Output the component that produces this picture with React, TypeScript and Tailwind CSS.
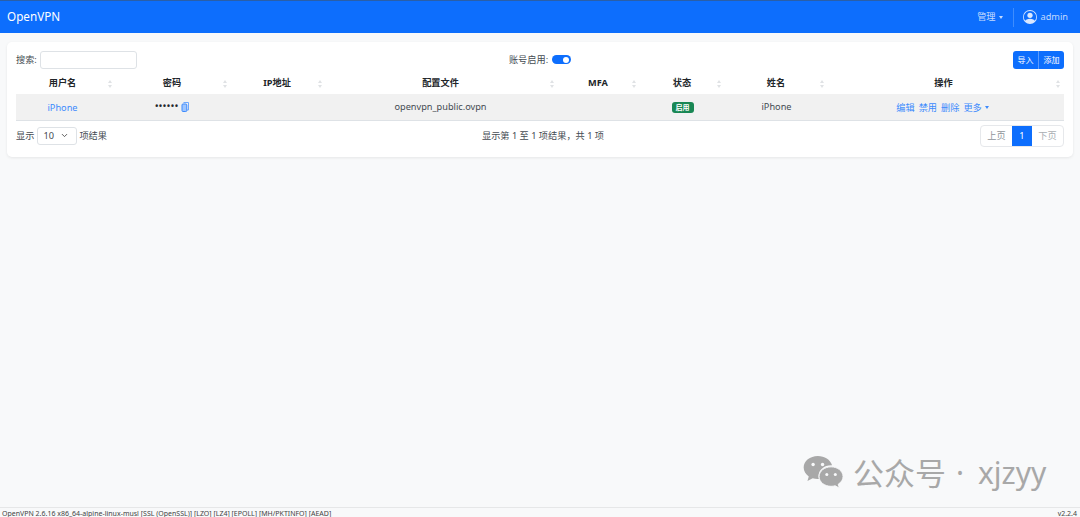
import { ChevronDown } from 'lucide-react';

const font = 'font-["Noto_Sans","Noto_Sans_CJK_SC",sans-serif]';

const columns = [
  { label: '用户名', width: 'w-[100px] pr-[7px]' },
  { label: '密码', width: 'w-[115px] pr-[3px]' },
  { label: 'IP地址', width: 'w-[95px] pr-[3px]' },
  { label: '配置文件', width: 'w-[232px] pr-[3px]' },
  { label: 'MFA', width: 'w-[82px] pr-[2px]' },
  { label: '状态', width: 'w-[85px] pr-[1px]' },
  { label: '姓名', width: 'w-[103px] pr-[1px]' },
  { label: '操作', width: 'w-[236px] pr-[5px]' },
];

function SortIcon() {
  return (
    <svg className="absolute right-[4px] top-[8px]" width="4" height="8" viewBox="0 0 4 8" fill="#e0e2e5">
      <path d="M2 0 4 3H0Z" />
      <path d="M2 8 0 5h4Z" />
    </svg>
  );
}

function WeChatMark() {
  return (
    <svg width="41" height="34" viewBox="0 0 42 36" fill="#a8a8a8">
      <path d="M15 0C6.700 0 0 5.400 0 12.200c0 3.800 2.100 7.100 5.400 9.400L4 26.500l5.600-2.900c1.600.5 3.300.8 5.100.8.5 0 1-.1 1.500-.1-.3-1-.5-2-.5-3.100 0-6.400 6-11.500 13.400-11.500h1C28.200 3.900 22.200 0 15 0Z" />
      <path d="M29 11.500c-7 0-12.700 4.600-12.700 10.300S22 32.100 29 32.100c1.500 0 3-.2 4.300-.6l4.500 2.500-1.200-4.100c3.200-2 5.100-4.900 5.100-8.100 0-5.700-5.700-10.300-12.700-10.300Z" stroke="#f8f9fa" strokeWidth="1" />
      <circle cx="10" cy="9" r="1.800" fill="#f8f9fa" />
      <circle cx="20" cy="9" r="1.800" fill="#f8f9fa" />
      <circle cx="24.500" cy="19.500" r="1.600" fill="#f8f9fa" />
      <circle cx="33.500" cy="19.500" r="1.600" fill="#f8f9fa" />
    </svg>
  );
}

export default function App() {
  return (
    <div className={`${font} relative flex h-[517px] w-[1080px] flex-col overflow-hidden bg-[#f8f9fa] text-[9.200px] text-[#444b52]`}>
      {/* Navbar */}
      <nav className="flex h-[33px] shrink-0 items-center justify-between border-t border-[#2a5fa8] bg-[#0d6efd] pl-[7px] pr-[12px]">
        <span className="text-[11.700px] text-white">OpenVPN</span>
        <div className="flex items-center text-[#c3dafe]">
          <span>管理</span>
          <span className="ml-[3px] h-0 w-0 border-x-[2.500px] border-t-[3px] border-x-transparent border-t-[#c3dafe]" />
          <div className="ml-[10px] mr-[9px] h-[19px] w-px bg-[#3f8dfd]" />
          <svg width="14" height="14" viewBox="0 0 16 16" fill="#dbe8ff">
            <path d="M11 6a3 3 0 1 1-6 0 3 3 0 0 1 6 0z" />
            <path fillRule="evenodd" d="M0 8a8 8 0 1 1 16 0A8 8 0 0 1 0 8zm8-7a7 7 0 0 0-5.468 11.370C3.242 11.226 4.805 10 8 10s4.757 1.225 5.468 2.370A7 7 0 0 0 8 1z" />
          </svg>
          <span className="ml-[4px]">admin</span>
        </div>
      </nav>

      {/* Main */}
      <main className="flex-1 px-[7px] pt-[9px]">
        <div className="rounded-[5px] bg-white px-[9px] pb-[10px] pt-[9px] shadow-[0_1px_3px_rgba(0,0,0,0.08)]">
          <div className="grid h-[18px] grid-cols-[1fr_auto_1fr] items-center">
            <div className="flex items-center">
              <span>搜索:</span>
              <input className="ml-[3px] h-[18px] w-[97px] rounded-[3px] border border-[#dee2e6] bg-white" />
            </div>
            <div className="flex items-center">
              <span>账号启用:</span>
              <span className="ml-[4px] flex h-[9px] w-[19px] items-center justify-end rounded-full bg-[#0d6efd] pr-[2px]">
                <span className="h-[6px] w-[6px] rounded-full bg-white" />
              </span>
            </div>
            <div className="flex justify-end">
              <div className="flex h-[18px] overflow-hidden rounded-[3px] bg-[#0d6efd] text-[8px] text-white">
                <span className="flex w-[25px] items-center justify-center">导入</span>
                <span className="flex w-[26px] items-center justify-center border-l border-[#5b9bfd]">添加</span>
              </div>
            </div>
          </div>

          <table className="mt-[3px] w-[1048px] table-fixed border-collapse">
            <thead>
              <tr className="h-[22px]">
                {columns.map((c) => (
                  <th key={c.label} className={`${c.width} relative text-center align-middle text-[9.200px] font-bold text-[#212529]`}>
                    {c.label}
                    <SortIcon />
                  </th>
                ))}
              </tr>
            </thead>
            <tbody>
              <tr className="h-[26px] border-b border-[#dee2e6] bg-[#f1f1f1] text-center">
                <td className="pr-[7px] pt-[2px] text-[#3d8bfd]">iPhone</td>
                <td className="pr-[3px] pt-[1px]">
                  <span className="inline-flex items-center text-[#212529]">
                    <span className="text-[10.500px] leading-none">••••••</span>
                    <svg className="ml-[3px]" width="8" height="10" viewBox="0 0 8 10" fill="none">
                      <path d="M2.500.5h5v7.500h-2" stroke="#6ea8fe" strokeWidth="1" />
                      <rect x="1" y="2" width="4.800" height="7.500" rx="1" fill="#9ec5fe" stroke="#3d8bfd" strokeWidth="1" />
                    </svg>
                  </span>
                </td>
                <td />
                <td className="pr-[3px]">openvpn_public.ovpn</td>
                <td />
                <td>
                  <span className="inline-block h-[11px] w-[22px] rounded-[3px] bg-[#198754] text-[7px] font-bold leading-[11px] text-white">启用</span>
                </td>
                <td>iPhone</td>
                <td className="pr-[7px] pt-[2px] text-[#3d8bfd]">
                  <span className="inline-flex items-center gap-[4px]">
                    <span>编辑</span>
                    <span>禁用</span>
                    <span>删除</span>
                    <span className="flex items-center">
                      更多
                      <span className="ml-[3px] h-0 w-0 border-x-[2.500px] border-t-[3px] border-x-transparent border-t-[#3d8bfd]" />
                    </span>
                  </span>
                </td>
              </tr>
            </tbody>
          </table>

          <div className="mt-[4px] grid h-[22px] grid-cols-[1fr_auto_1fr] items-center">
            <div className="flex items-center">
              <span>显示</span>
              <div className="ml-[3px] mr-[2px] flex h-[18px] w-[40px] items-center justify-between rounded-[3px] border border-[#dee2e6] pl-[5px] pr-[7px]">
                <span>10</span>
                <ChevronDown size={9} strokeWidth={2.500} className="text-[#555]" />
              </div>
              <span>项结果</span>
            </div>
            <div className="whitespace-pre pl-[6px]">显示第 1 至 1 项结果，共 1 项</div>
            <div className="flex justify-end">
              <div className="flex h-[22px] overflow-hidden rounded-[4px] border border-[#e6e8eb] text-[#8f959b]">
                <span className="flex w-[31px] items-center justify-center">上页</span>
                <span className="flex w-[20px] items-center justify-center bg-[#0d6efd] text-white">1</span>
                <span className="flex w-[31px] items-center justify-center text-[#a9aeb3]">下页</span>
              </div>
            </div>
          </div>
        </div>
      </main>

      {/* Watermark sits over the page background */}
      <div className="absolute left-[803px] top-[456px] flex items-start text-[30px] leading-[34px] text-[#a8a8a8]">
        <WeChatMark />
        <span className="ml-[9px] whitespace-nowrap text-[31px]">公众号</span>
        <span className="ml-[10px] w-[21px]">·</span>
        <span className="ml-[1px]">xjzyy</span>
      </div>

      {/* Footer */}
      <footer className="flex h-[10px] shrink-0 items-center justify-between border-t border-[#e6e7e8] bg-[#f8f9fa] pl-[2px] pr-[3px] pt-[2px] text-[7px] leading-none text-[#444]">
        <span>OpenVPN 2.6.16 x86_64-alpine-linux-musl [SSL (OpenSSL)] [LZO] [LZ4] [EPOLL] [MH/PKTINFO] [AEAD]</span>
        <span>v2.2.4</span>
      </footer>
    </div>
  );
}
